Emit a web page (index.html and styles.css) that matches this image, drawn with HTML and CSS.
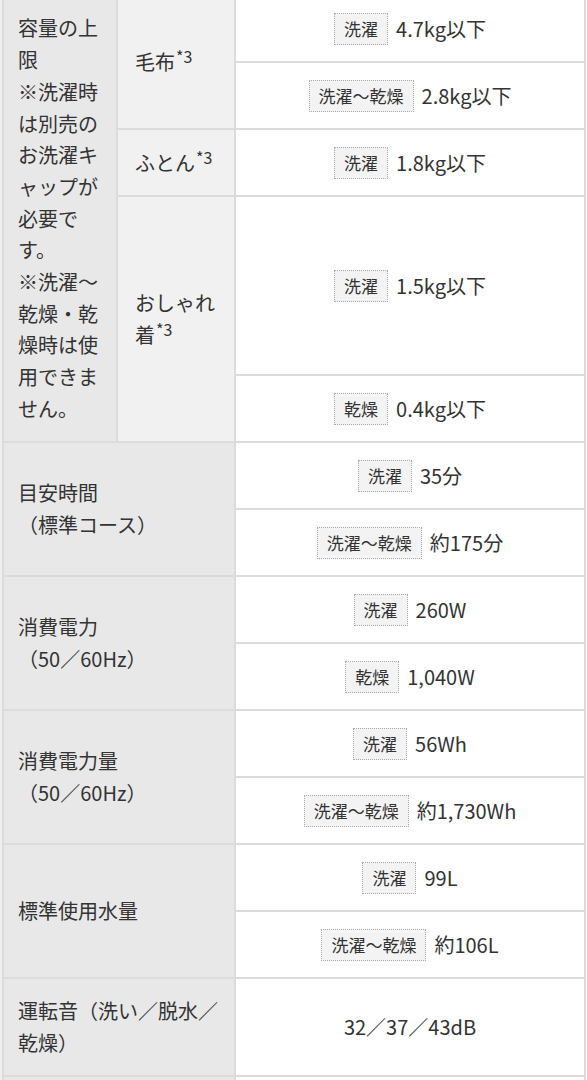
FILE: index.html
```html
<!DOCTYPE html>
<html lang="ja">
<head>
<meta charset="utf-8">
<link rel="stylesheet" href="styles.css">
</head>
<body>
<div class="viewport">
  <div class="spec">
    <div class="th main r5"><span>容量の上限<br>※洗濯時は別売のお洗濯キャップが必要です。<br>※洗濯〜乾燥・乾燥時は使用できません。</span></div>
    <div class="th sub r2"><span>毛布<sup>*3</sup></span></div>
    <div class="td"><span class="tag">洗濯</span><span class="val">4.7kg以下</span></div>
    <div class="td"><span class="tag">洗濯〜乾燥</span><span class="val">2.8kg以下</span></div>
    <div class="th sub"><span>ふとん<sup>*3</sup></span></div>
    <div class="td"><span class="tag">洗濯</span><span class="val">1.8kg以下</span></div>
    <div class="th sub r2"><span>おしゃれ着<sup>*3</sup></span></div>
    <div class="td"><span class="tag">洗濯</span><span class="val">1.5kg以下</span></div>
    <div class="td"><span class="tag">乾燥</span><span class="val">0.4kg以下</span></div>

    <div class="th main wide r2"><span>目安時間<br>（標準コース）</span></div>
    <div class="td"><span class="tag">洗濯</span><span class="val">35分</span></div>
    <div class="td"><span class="tag">洗濯〜乾燥</span><span class="val">約175分</span></div>

    <div class="th main wide r2"><span>消費電力<br>（50／60Hz）</span></div>
    <div class="td"><span class="tag">洗濯</span><span class="val">260W</span></div>
    <div class="td"><span class="tag">乾燥</span><span class="val">1,040W</span></div>

    <div class="th main wide r2"><span>消費電力量<br>（50／60Hz）</span></div>
    <div class="td"><span class="tag">洗濯</span><span class="val">56Wh</span></div>
    <div class="td"><span class="tag">洗濯〜乾燥</span><span class="val">約1,730Wh</span></div>

    <div class="th main wide r2"><span>標準使用水量</span></div>
    <div class="td"><span class="tag">洗濯</span><span class="val">99L</span></div>
    <div class="td"><span class="tag">洗濯〜乾燥</span><span class="val">約106L</span></div>

    <div class="th main wide"><span>運転音（洗い／脱水／乾燥）</span></div>
    <div class="td"><span class="val">32／37／43dB</span></div>

    <div class="th main wide"></div>
    <div class="td"></div>
  </div>
</div>
</body>
</html>
```

FILE: styles.css
```css
html, body {
  margin: 0;
  padding: 0;
  background: #ffffff;
}

body {
  font-family: "Noto Sans CJK JP", "Noto Sans", sans-serif;
  color: #333333;
}

.viewport {
  height: 1080px;
  overflow: hidden;
  border-left: 2px solid #eeeeee;
}

.spec {
  display: grid;
  grid-template-columns: 112px 116px 1fr;
  grid-template-rows: 65px 65px 65px 177px 65px repeat(8, 65px) 96px 65px;
  gap: 2px;
  padding: 2px;
  width: 584px;
  box-sizing: border-box;
  margin: -6px 0 0 0;
  background: #dcdcdc;
}

.th {
  display: flex;
  align-items: center;
  font-size: 20px;
  line-height: 31.7px;
  line-break: loose;
}

.main {
  background: #e8e8e8;
  padding: 0 14px;
}

.sub {
  background: #f1f1f1;
  padding: 0 12px 0 17px;
}

.wide {
  grid-column: 1 / span 2;
}

.r2 {
  grid-row: span 2;
}

.r5 {
  grid-row: span 5;
}

.th sup {
  font-size: 16px;
  line-height: 0;
  vertical-align: 7px;
  margin-left: 1px;
}

.td {
  background: #ffffff;
  display: flex;
  align-items: center;
  justify-content: center;
  gap: 8px;
  font-size: 20px;
}

.tag {
  display: inline-block;
  font-size: 17px;
  line-height: 30px;
  padding: 0 9px;
  border: 1px dotted #aaaaaa;
  background: #f3f3f3;
  color: #333333;
}

.val {
  line-height: 30px;
}
```
